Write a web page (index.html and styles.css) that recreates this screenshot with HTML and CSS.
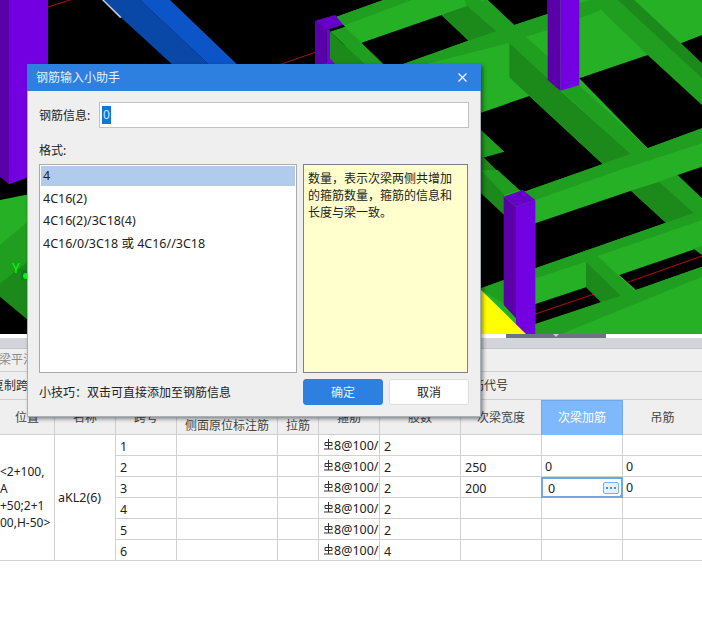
FILE: index.html
```html
<!DOCTYPE html>
<html lang="zh">
<head>
<meta charset="utf-8">
<title>钢筋输入小助手</title>
<link rel="stylesheet" href="styles.css">
</head>
<body>
<div class="page">
  <svg class="scene" width="702" height="334" viewBox="0 0 702 334">
    <rect class="k" width="702" height="334"/>
    <g transform="scale(.33333)">
      <polygon class="l" points="0,600 90,582 90,1002 0,1002"/>
      <polygon class="m" points="0,735 90,660 90,780 0,850"/>
      <polygon class="d" points="0,850 90,780 90,970 0,895"/>
      <polygon class="k" points="0,890 90,965 90,1002 0,1002"/>
      <polygon class="b2" points="306,0 420,0 625,192 515,192"/>
      <polygon class="b1" points="420,0 510,0 710,192 625,192"/>
      <polygon class="gl" points="306,0 312,0 365,52 360,54"/>
      <polygon class="p2" points="0,0 27,0 27,553 0,530"/>
      <polygon class="p1" points="27,0 144,0 144,510 27,553"/>
      <line class="r" x1="144" y1="21" x2="210" y2="0"/>
      <line class="r" x1="845" y1="192" x2="945" y2="157"/>
    </g>
    <g transform="translate(310) scale(.33333)">
      <polygon class="p2" points="15,62 50,88 50,192 15,192"/>
      <polygon class="p1" points="50,88 60,90 60,175 80,192 50,192"/>
      <polygon class="p3" points="15,62 75,45 105,72 50,90"/>
      <polygon class="l" points="80,50 220,0 540,0 540,192 105,192 105,80"/>
      <polygon class="m" points="80,50 220,0 305,0 105,75"/>
      <polygon class="m" points="465,0 540,0 540,70 478,88 395,45 470,18"/>
      <polygon class="d" points="395,45 473,18 561,95 475,122"/>
      <polygon class="k" points="155,128 395,45 475,122 280,192 220,192"/>
      <polygon class="m" points="60,95 105,80 220,192 165,192"/>
      <polygon class="d" points="60,95 165,192 75,192 60,175"/>
    </g>
    <g transform="translate(351) scale(.33333)">
      <polygon class="l" points="139,192 390,100 390,0 1053,0 1053,510 390,510 390,192"/>
      <polygon class="m" points="350,20 405,0 490,75 438,95"/>
      <polygon class="d" points="272,47 350,20 438,95 352,122"/>
      <polygon class="k" points="272,47 352,122 157,192 97,192 33,130"/>
      <polygon class="k" points="410,0 590,0 590,42 490,75"/>
      <polygon class="m" points="157,192 352,122 490,75 590,42 590,90 525,110 475,128 227,192"/>
      <polygon class="m" points="685,10 720,0 750,30 685,55"/>
      <polygon class="m" points="720,0 800,0 1053,235 1053,315 890,165"/>
      <polygon class="d" points="800,0 850,0 1053,190 1053,235"/>
      <polygon class="k" points="990,130 1053,105 1053,190"/>
      <polygon class="k" points="685,235 890,165 1053,315 1053,385 890,445"/>
      <polygon class="k" points="390,338 535,288 755,492 705,510 435,510 390,465"/>
      <polygon class="d" points="475,128 590,235 628,272 840,462 755,492 535,288 475,232"/>
      <polygon class="m" points="475,128 525,110 890,445 840,462"/>
      <polygon class="m" points="705,510 890,445 1053,385 1053,430 805,510"/>
      <polygon class="m" points="390,390 460,455 390,475"/>
      <polygon class="d" points="390,465 435,510 390,510"/>
      <polygon class="p2" points="590,0 628,0 628,272 590,240"/>
      <polygon class="p1" points="628,0 685,0 685,255 628,272"/>
    </g>
    <g transform="translate(481,170) scale(.33333)">
      <polygon class="l" points="0,0 663,0 663,492 0,492"/>
      <polygon class="m" points="0,0 50,0 115,60 70,75 0,15"/>
      <polygon class="d" points="0,0 70,75 70,135 0,70"/>
      <polygon class="k" points="0,70 70,135 70,330 0,355"/>
      <polygon class="k" points="50,0 315,0 130,65 115,60"/>
      <polygon class="m" points="130,65 315,0 415,0 163,90"/>
      <polygon class="k" points="163,160 450,62 555,158 163,295"/>
      <polygon class="d" points="450,62 535,35 640,130 555,158"/>
      <polygon class="m" points="535,35 590,15 663,85 663,122 640,130"/>
      <polygon class="k" points="590,15 663,-10 663,85"/>
      <polygon class="m" points="163,295 555,158 640,130 663,122 663,150 350,258 315,275 163,325"/>
      <polygon class="m" points="640,235 663,228 663,255"/>
      <polygon class="k" points="415,315 640,238 663,255 663,290 465,360"/>
      <line class="r" x1="437" y1="338" x2="663" y2="258"/>
      <polygon class="m" points="315,275 350,258 470,372 420,378"/>
      <polygon class="d" points="315,275 420,378 360,397 315,352"/>
      <polygon class="k" points="163,402 315,352 360,397 163,462"/>
      <line class="r" x1="163" y1="432" x2="340" y2="372"/>
      <polygon class="m" points="163,465 360,397 420,378 465,360 663,290 663,320 240,492 163,492"/>
      <polygon class="m" points="0,355 68,330 68,400 0,360"/>
      <polygon class="p2" points="68,80 105,110 105,445 68,405"/>
      <polygon class="p1" points="105,110 163,90 163,492 105,492"/>
      <polygon class="p3" points="68,80 125,60 163,90 105,110"/>
      <polygon class="y" points="0,360 135,492 0,492"/>
    </g>
    <text class="axis" x="12" y="273">Y</text>
    <rect class="axb" x="21" y="270" width="6" height="10"/>
    <circle class="axc" cx="26" cy="276" r="3"/>
  </svg>

  <div class="strip"><span class="handle"><span class="arrow"></span></span></div>
  <div class="band"></div>
  <div class="tabs"><span class="tab">梁平法</span></div>
  <div class="toolbar">
    <span class="tool-first">复制跨</span>
    <span class="tool-last">筋代号</span>
  </div>

  <div class="grid">
    <div class="hc">位置</div>
    <div class="hc">名称</div>
    <div class="hc">跨号</div>
    <div class="hc low">侧面原位标注筋</div>
    <div class="hc low">拉筋</div>
    <div class="hc">箍筋</div>
    <div class="hc">肢数</div>
    <div class="hc">次梁宽度</div>
    <div class="hc on">次梁加筋</div>
    <div class="hc last">吊筋</div>

    <div class="c pos">&lt;2+100,<br>A<br>+50;2+1<br>00,H-50&gt;</div>
    <div class="c name">aKL2(6)</div>

    <div class="c">1</div><div class="c"></div><div class="c"></div><div class="c st"><svg class="bar" viewBox="0 0 9 11"><path d="M4.5 0V10M1 3.5H8V6.5H1ZM0 10H9"/></svg>8@100/</div><div class="c">2</div><div class="c"></div><div class="c"></div><div class="c last"></div>
    <div class="c">2</div><div class="c"></div><div class="c"></div><div class="c st"><svg class="bar" viewBox="0 0 9 11"><path d="M4.5 0V10M1 3.5H8V6.5H1ZM0 10H9"/></svg>8@100/</div><div class="c">2</div><div class="c">250</div><div class="c up">0</div><div class="c last up">0</div>
    <div class="c">3</div><div class="c"></div><div class="c"></div><div class="c st"><svg class="bar" viewBox="0 0 9 11"><path d="M4.5 0V10M1 3.5H8V6.5H1ZM0 10H9"/></svg>8@100/</div><div class="c">2</div><div class="c">200</div>
    <div class="c edit">0<span class="more"><i></i><i></i><i></i></span><span class="grip"></span></div>
    <div class="c last up">0</div>
    <div class="c">4</div><div class="c"></div><div class="c"></div><div class="c st"><svg class="bar" viewBox="0 0 9 11"><path d="M4.5 0V10M1 3.5H8V6.5H1ZM0 10H9"/></svg>8@100/</div><div class="c">2</div><div class="c"></div><div class="c"></div><div class="c last"></div>
    <div class="c">5</div><div class="c"></div><div class="c"></div><div class="c st"><svg class="bar" viewBox="0 0 9 11"><path d="M4.5 0V10M1 3.5H8V6.5H1ZM0 10H9"/></svg>8@100/</div><div class="c">2</div><div class="c"></div><div class="c"></div><div class="c last"></div>
    <div class="c">6</div><div class="c"></div><div class="c"></div><div class="c st"><svg class="bar" viewBox="0 0 9 11"><path d="M4.5 0V10M1 3.5H8V6.5H1ZM0 10H9"/></svg>8@100/</div><div class="c">4</div><div class="c"></div><div class="c"></div><div class="c last"></div>
  </div>

  <section class="dialog">
    <header class="d-title">
      <span>钢筋输入小助手</span>
      <svg class="close" viewBox="0 0 9 9"><path d="M.5 .5L8.5 8.5M8.5 .5L.5 8.5"/></svg>
    </header>
    <div class="d-body">
      <div class="d-field">
        <label class="d-label">钢筋信息:</label>
        <div class="d-input"><span class="sel">0</span></div>
      </div>
      <div class="d-format">格式:</div>
      <div class="d-panes">
        <ul class="d-list">
          <li class="active">4</li>
          <li>4C16(2)</li>
          <li>4C16(2)/3C18(4)</li>
          <li>4C16/0/3C18 或 4C16//3C18</li>
        </ul>
        <div class="d-note">数量&#xFF0C;表示次梁两侧共增加的箍筋数量&#xFF0C;箍筋的信息和长度与梁一致。</div>
      </div>
      <div class="d-foot">
        <span class="d-tip">小技巧&#xFF1A;双击可直接添加至钢筋信息</span>
        <button class="btn primary">确定</button>
        <button class="btn">取消</button>
      </div>
    </div>
  </section>
</div>
</body>
</html>
```
FILE: styles.css
```css
* { box-sizing: border-box; }
html, body { margin: 0; padding: 0; background: #fff; }
body { font: 12px/17px "Noto Sans", "Noto Sans CJK SC", sans-serif; color: #222; }
.page { position: relative; width: 702px; height: 627px; overflow: hidden; }

.scene { display: block; }
.k { fill: #000; }
.l { fill: #25b025; }
.m { fill: #1f9e1f; }
.d { fill: #1b8a1b; }
.p1 { fill: #7300e0; }
.p2 { fill: #5a00a8; }
.p3 { fill: #6600c8; }
.b1 { fill: #0b55c8; }
.b2 { fill: #0a48a8; }
.gl { fill: #c8c8c8; }
.y { fill: #ffff00; }
.r { stroke: #e0101c; stroke-width: 2.4; }
.axis { fill: #00ff00; font: 14px "Noto Sans", sans-serif; }
.axb { fill: #0c7a2a; }
.axc { fill: #00ff00; }

.strip { position: relative; height: 4px; background: #fff; }
.handle { position: absolute; left: 506px; top: 0; width: 100px; height: 4px; background: #6b7480; }
.arrow { position: absolute; left: 47px; top: 0; border: 3px solid transparent; border-top-color: #c9ccd2; border-bottom: 0; }
.band { height: 11px; background: #d4d5da; border-bottom: 1px solid #c4c4c8; }
.tabs { height: 23px; background: #efefef; border-bottom: 1px solid #cfcfcf; }
.tab { display: block; margin-left: -1px; line-height: 22px; color: #8a8a8a; white-space: nowrap; }
.toolbar { display: flex; align-items: center; height: 28px; background: #efefef; border-bottom: 1px solid #cfcfcf; }
.tool-first { margin-left: -8px; color: #333; white-space: nowrap; }
.tool-last { margin-left: auto; margin-right: 194px; color: #333; white-space: nowrap; }

.grid {
  display: grid;
  grid-template-columns: 55px 61px 61px 101px 41px 61px 81px 81px 81px 79px;
  grid-template-rows: 35px repeat(6, 21px);
}
.hc {
  display: flex; align-items: center; justify-content: center;
  background: #efefef; color: #444; white-space: nowrap; overflow: hidden;
  border-right: 1px solid #cfcfcf; border-bottom: 1px solid #cfcfcf;
}
.hc.low { align-items: flex-end; line-height: 17px; }
.hc.on { margin-left: -1px; background: #7fb8fb; color: #fff; border: 1px solid #6fa9ec; border-bottom-color: #7fb8fb; }
.hc.last, .c.last { border-right: 0; }

.c {
  position: relative; min-width: 0; padding: 2px 4px 0; font-size: 12.5px; line-height: 19px; color: #222;
  white-space: nowrap; overflow: hidden; background: #fff;
  border-right: 1px solid #d2d2d2; border-bottom: 1px solid #d2d2d2;
}
.c.up { padding: 1px 3px 0; }
.pos { grid-row: span 6; padding: 28px 0 0; font-size: 12px; line-height: 17px; }
.name { grid-row: span 6; padding: 53px 3px 0; }
.st { padding-left: 5px; padding-top: 1px; padding-right: 0; }
.bar { width: 9px; height: 11px; margin-right: 1px; vertical-align: 0; }
.bar path { fill: none; stroke: #333; stroke-width: 1; }
.edit { margin-left: -1px; overflow: visible; padding: 1px 0 0 5px; line-height: 17px; border: 2px solid #6aa8e8; }
.more {
  position: absolute; right: 2px; top: 3px; display: flex; align-items: center; justify-content: center; gap: 2px;
  width: 16px; height: 12px; background: #e4f0fd; border: 1px solid #7cb2ea; border-radius: 2px;
}
.more i { width: 2px; height: 2px; background: #4f8fd8; }
.grip { position: absolute; right: -4px; bottom: -4px; width: 5px; height: 5px; background: #6aa8e8; }

.dialog {
  position: absolute; left: 27px; top: 64px; width: 454px; height: 353px;
  display: flex; flex-direction: column; background: #efefef;
  border: 1px solid #a9afb6; border-top: 0;
  box-shadow: 2px 2px 4px rgba(0, 0, 0, .45);
}
.d-title {
  display: flex; align-items: center; justify-content: space-between;
  height: 27px; margin: 0 -1px; padding: 0 14px 0 9px; background: #2d7fe0; color: #e6f0fc; font-size: 12px;
}
.close { width: 9px; height: 9px; }
.close path { fill: none; stroke: #fff; stroke-width: 1.1; }
.d-body { flex: 1; display: flex; flex-direction: column; padding: 11px; }
.d-field { display: flex; align-items: center; gap: 8px; height: 26px; }
.d-label { white-space: nowrap; width: 52px; }
.d-input { flex: 1; height: 26px; padding: 3px 2px; background: #fff; border: 1px solid #c2c2c2; }
.sel { display: inline-block; height: 18px; padding: 0 1px; line-height: 18px; background: #0a78d7; color: #cfe4f8; }
.d-format { margin-top: 14px; height: 22px; }
.d-panes { display: flex; gap: 6px; height: 209px; }
.d-list { width: 258px; margin: 0; padding: 1px; list-style: none; background: #fff; border: 1px solid #aaa; font-size: 12.5px; }
.d-list li { height: 22px; padding-left: 2px; line-height: 24px; color: #222; }
.d-list li:last-child { line-height: 26px; }
.d-list li.active { height: 20px; background: #b0cbeb; line-height: 20px; margin-bottom: 1px; }
.d-note { width: 165px; padding: 5px 4px; background: #ffffcd; border: 1px solid #808080; line-height: 17px; }
.d-foot { display: flex; align-items: center; gap: 6px; margin-top: 6px; height: 26px; }
.d-tip { flex: 1; white-space: nowrap; }
.btn { width: 80px; height: 26px; padding: 0; font: inherit; color: #222; background: #fff; border: 1px solid #dcdcdc; border-radius: 3px; }
.btn.primary { background: #2d7fe0; border-color: #2d7fe0; color: #e6f0fc; }
```
